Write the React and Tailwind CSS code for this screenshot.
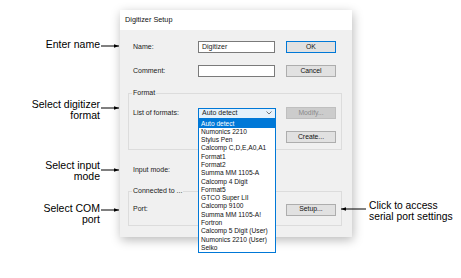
const items = [
  "Auto detect",
  "Numonics 2210",
  "Stylus Pen",
  "Calcomp C,D,E,A0,A1",
  "Format1",
  "Format2",
  "Summa MM 1105-A",
  "Calcomp 4 Digit",
  "Format5",
  "GTCO Super LII",
  "Calcomp 9100",
  "Summa MM 1105-A!",
  "Fortron",
  "Calcomp 5 Digit (User)",
  "Numonics 2210 (User)",
  "Seiko",
];

function Button({ children, primary, disabled }) {
  return (
    <div
      className={`w-[50px] h-[12px] flex items-center justify-center text-[6.8px] border ${
        primary
          ? "border-[#0078d7] bg-[#e1e1e1] text-[#111]"
          : disabled
          ? "border-[#bfbfbf] bg-[#cccccc] text-[#8a8a8a]"
          : "border-[#adadad] bg-[#e1e1e1] text-[#111]"
      }`}
    >
      {children}
    </div>
  );
}

// arrow pointing right (dir="r") or left (dir="l")
function Arrow({ left, top, width, dir = "r" }) {
  return (
    <svg
      className="absolute"
      style={{ left, top: top - 3 }}
      width={width}
      height="6"
      viewBox={`0 0 ${width} 6`}
    >
      <line x1="0" y1="3" x2={width} y2="3" stroke="#000" strokeWidth="1" />
      {dir === "r" ? (
        <polygon points={`${width - 5},1.3 ${width},3 ${width - 5},4.7`} fill="#000" />
      ) : (
        <polygon points="5,1.3 0,3 5,4.7" fill="#000" />
      )}
    </svg>
  );
}

export default function App() {
  return (
    <div className="relative w-[461px] h-[278px] bg-white overflow-hidden font-['Liberation_Sans',Arial,sans-serif]">
      <div className="pt-[10px] pl-[120px]">
        {/* dialog */}
        <div className="relative w-[232px] h-[227px] bg-[#f0f0f0] shadow-[1px_3px_10px_rgba(0,0,0,0.28)] text-[7px] text-[#1a1a1a]">
          <div className="h-[20px] bg-white flex items-center pl-[5px] text-[7.3px] text-[#111]">
            Digitizer Setup
          </div>

          <div className="flex flex-col pt-[11px]">
            <div className="flex items-center h-[12px]">
              <div className="w-[65px] ml-[13px]">Name:</div>
              <div className="w-[77px] h-[12px] bg-white border border-[#7a7a7a] flex items-center pl-[3px] text-[7px]">
                Digitizer
              </div>
              <div className="ml-[11px]">
                <Button primary>OK</Button>
              </div>
            </div>

            <div className="flex items-center h-[12px] mt-[12px]">
              <div className="w-[65px] ml-[13px]">Comment:</div>
              <div className="w-[77px] h-[12px] bg-white border border-[#7a7a7a]" />
              <div className="ml-[11px]">
                <Button>Cancel</Button>
              </div>
            </div>

            {/* Format group */}
            <div className="relative mt-[16px] ml-[8px] w-[214px] h-[57px] border border-[#dcdcdc] pt-[13px]">
              <div className="absolute -top-[5px] left-[3px] px-[1px] bg-[#f0f0f0] leading-[8px]">Format</div>
              <div className="flex items-center h-[12px]">
                <div className="w-[65px] ml-[4px]">List of formats:</div>
                <div className="relative z-10">
                  <div className="w-[78px] h-[11px] bg-[#e5f1fb] border border-[#0078d7] flex items-center justify-between pl-[3px] pr-[3px]">
                    <span>Auto detect</span>
                    <svg width="6" height="4" viewBox="0 0 6 4">
                      <polyline points="0.5,0.5 3,3 5.5,0.5" fill="none" stroke="#555" strokeWidth="0.8" />
                    </svg>
                  </div>
                  <div className="absolute top-[11px] left-0 w-[78px] bg-white border border-[#0078d7] flex flex-col text-[6.6px]">
                    {items.map((it, i) => (
                      <div
                        key={it}
                        className={`h-[8.3px] leading-[8.3px] pl-[2px] whitespace-nowrap ${
                          i === 0 ? "bg-[#0078d7] text-white" : "text-[#111]"
                        }`}
                      >
                        {it}
                      </div>
                    ))}
                  </div>
                </div>
                <div className="ml-[10px]">
                  <Button disabled>Modify...</Button>
                </div>
              </div>
              <div className="flex items-center h-[12px] mt-[12px]">
                <div className="ml-[157px]">
                  <Button>Create...</Button>
                </div>
              </div>
            </div>

            <div className="flex items-center h-[12px] mt-[14px]">
              <div className="ml-[13px]">Input mode:</div>
            </div>

            {/* Connected group */}
            <div className="relative mt-[15px] ml-[8px] w-[214px] h-[35px] border border-[#dcdcdc] pt-[11px]">
              <div className="absolute -top-[5px] left-[3px] px-[1px] bg-[#f0f0f0] leading-[8px]">Connected to ...</div>
              <div className="flex items-center h-[13px]">
                <div className="ml-[4px] w-[153px]">Port:</div>
                <Button>Setup...</Button>
              </div>
            </div>
          </div>
        </div>
      </div>

      {/* callouts */}
      <div className="absolute right-[361px] top-[39px] text-[10.5px] leading-[11px] text-right text-black">Enter name</div>
      <Arrow left={101} top={46} width={18} />

      <div className="absolute right-[361px] top-[99px] text-[10.5px] leading-[11px] text-right text-black">
        Select digitizer
        <br />
        format
      </div>
      <Arrow left={101} top={108} width={18} />

      <div className="absolute right-[361px] top-[160px] text-[10.5px] leading-[11px] text-right text-black">
        Select input
        <br />
        mode
      </div>
      <Arrow left={101} top={170} width={18} />

      <div className="absolute right-[361px] top-[203px] text-[10.5px] leading-[11px] text-right text-black">
        Select COM
        <br />
        port
      </div>
      <Arrow left={101} top={210} width={18} />

      <div className="absolute left-[369px] top-[200px] text-[10.3px] leading-[11px] text-black">
        Click to access
        <br />
        serial port settings
      </div>
      <Arrow left={341} top={209} width={25} dir="l" />
    </div>
  );
}
